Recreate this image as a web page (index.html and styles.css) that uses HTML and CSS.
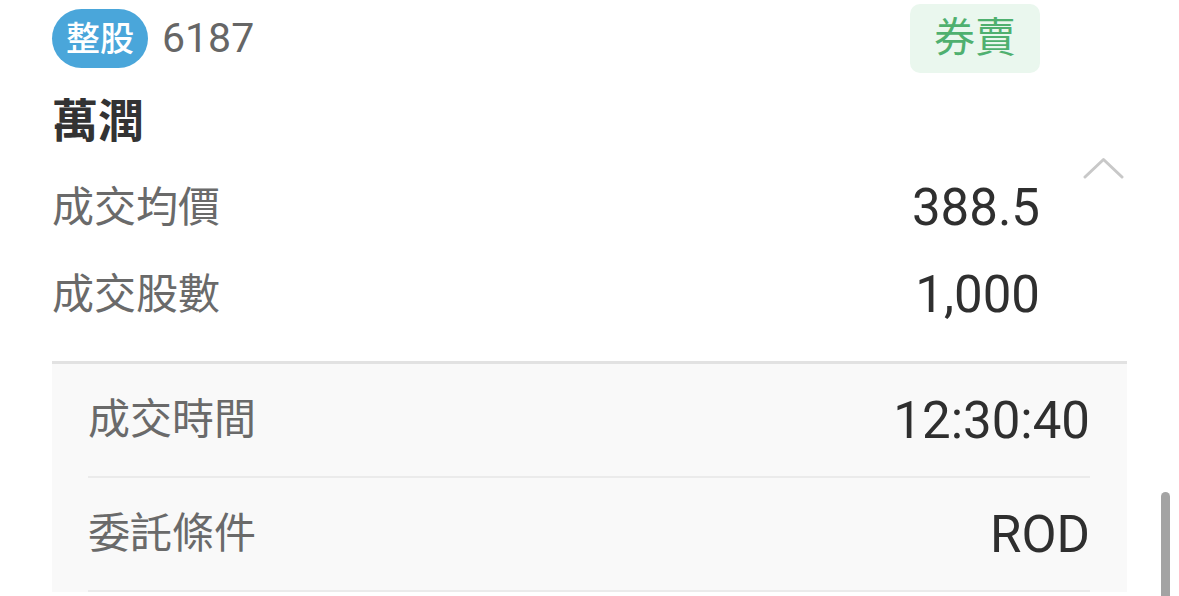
FILE: index.html
```html
<!DOCTYPE html>
<html lang="zh-Hant">
<head>
    <meta charset="UTF-8">
    <meta name="viewport" content="width=device-width, initial-scale=1.0">
    <title>成交明細 - 萬潤</title>
    <link rel="stylesheet" href="styles.css">
</head>
<body>
    <div class="trade-card">
        <div class="summary">
            <div class="summary-main">
                <div class="summary-header">
                    <div class="stock-id">
                        <span class="lot-badge">整股</span>
                        <span class="stock-code">6187</span>
                    </div>
                    <span class="side-tag">券賣</span>
                </div>
                <div class="stock-name">萬潤</div>
                <div class="info-row">
                    <span class="info-label">成交均價</span>
                    <span class="info-value">388.5</span>
                </div>
                <div class="info-row">
                    <span class="info-label">成交股數</span>
                    <span class="info-value">1,000</span>
                </div>
            </div>
            <div class="summary-toggle">
                <svg class="chevron" width="41" height="22" viewBox="0 0 41 22">
                    <polyline points="2,20 20.5,2.5 39,20" fill="none" stroke="#c8c8c8" stroke-width="3" stroke-linecap="round" stroke-linejoin="round"/>
                </svg>
            </div>
        </div>

        <div class="details">
            <div class="detail-row">
                <span class="info-label">成交時間</span>
                <span class="info-value">12:30:40</span>
            </div>
            <div class="detail-row">
                <span class="info-label">委託條件</span>
                <span class="info-value">ROD</span>
            </div>
        </div>
    </div>

    <div class="scroll-indicator"></div>
</body>
</html>
```

FILE: styles.css
```css
* {
    margin: 0;
    padding: 0;
    box-sizing: border-box;
}

body {
    font-family: Roboto, "Noto Sans CJK TC", sans-serif;
    background: #ffffff;
    color: #333333;
    width: 1179px;
    height: 596px;
    overflow: hidden;
}

.trade-card {
    padding: 0 52px;
}

.summary {
    display: flex;
}

.summary-main {
    flex: 1;
    padding-bottom: 23px;
}

.summary-toggle {
    width: 87px;
    display: flex;
    justify-content: flex-end;
    align-items: flex-start;
    padding-top: 157px;
    padding-right: 3px;
}

.summary-header {
    display: flex;
    justify-content: space-between;
    align-items: center;
    padding-top: 4px;
    height: 73px;
}

.stock-id {
    display: flex;
    align-items: center;
    gap: 14px;
}

.lot-badge {
    display: flex;
    align-items: center;
    height: 59px;
    padding: 0 14px;
    border-radius: 30px;
    background: #4aa6da;
    color: #ffffff;
    font-size: 34px;
    font-weight: 500;
    line-height: 1;
}

.stock-code {
    font-size: 41px;
    color: #666666;
    line-height: 1;
}

.side-tag {
    display: flex;
    align-items: center;
    height: 69px;
    padding: 0 24px;
    border-radius: 10px;
    background: #eaf7ee;
    color: #4fb06f;
    font-size: 41px;
    line-height: 1;
}

.stock-name {
    margin-top: 23px;
    height: 50px;
    line-height: 50px;
    font-size: 46px;
    font-weight: bold;
    color: #333333;
}

.info-row {
    display: flex;
    justify-content: space-between;
    align-items: center;
    height: 87px;
}

.stock-name + .info-row {
    margin-top: 18px;
}

.info-label {
    font-size: 42px;
    color: #6a6a6a;
    line-height: 1;
}

.info-value {
    font-size: 51px;
    color: #2f2f2f;
    line-height: 1;
}

.details {
    border-top: 3px solid #e2e2e2;
    background: #f9f9f9;
    padding: 0 37px 0 36px;
}

.detail-row {
    display: flex;
    justify-content: space-between;
    align-items: center;
    height: 114px;
    border-bottom: 2px solid #ebebeb;
}

.scroll-indicator {
    position: fixed;
    left: 1161px;
    top: 492px;
    width: 9px;
    height: 120px;
    border-radius: 5px;
    background: #a3a3a3;
}
```
